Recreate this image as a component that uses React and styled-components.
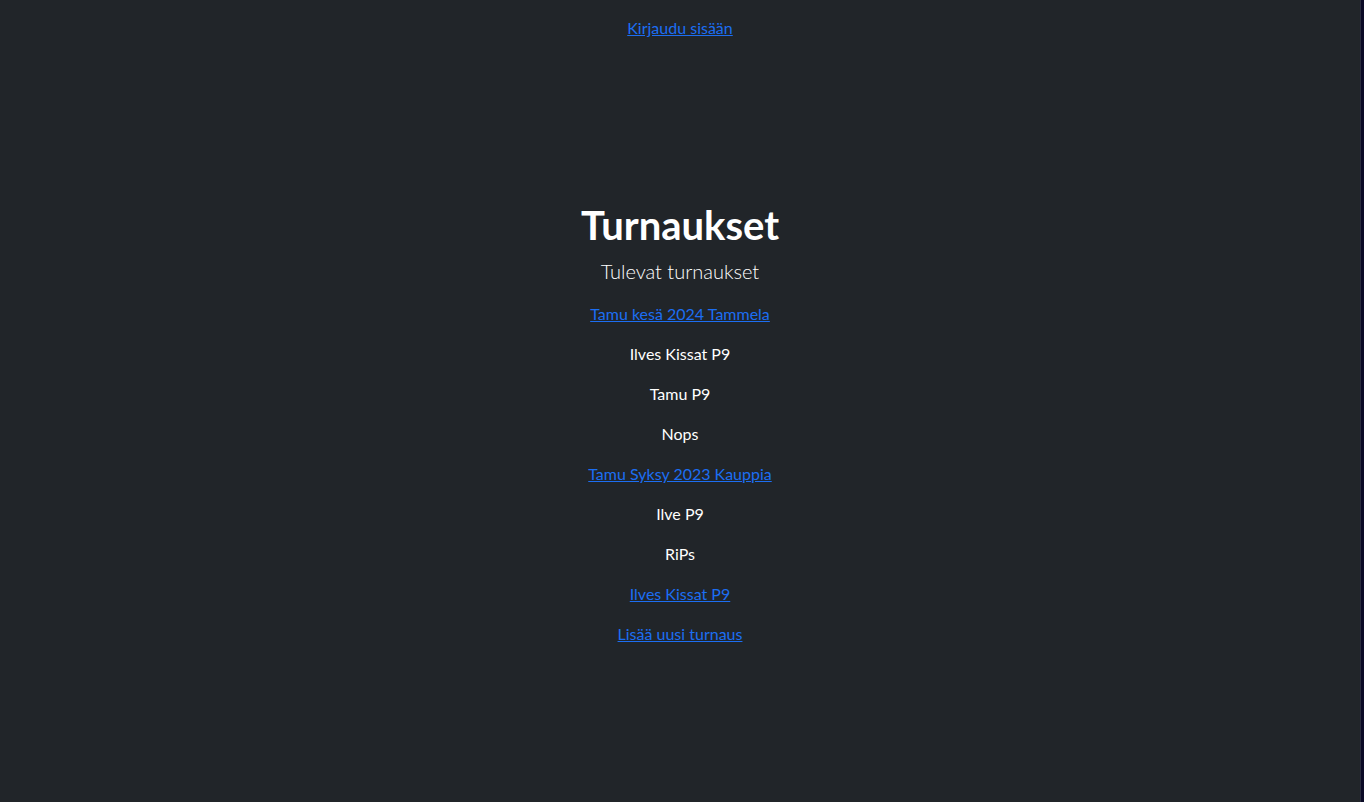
import React from "react";
import styled, { createGlobalStyle } from "styled-components";

const GlobalStyle = createGlobalStyle`
  html {
    background-color: #0a0a26;
  }
  body {
    margin: 0;
    font-family: Lato, "Liberation Sans", sans-serif;
    font-size: 16px;
    line-height: 1.5;
    color: #ffffff;
  }
`;

const tournaments = [
  { name: "Tamu kesä 2024 Tammela", link: true },
  { name: "Ilves Kissat P9" },
  { name: "Tamu P9" },
  { name: "Nops" },
  { name: "Tamu Syksy 2023 Kauppia", link: true },
  { name: "Ilve P9" },
  { name: "RiPs" },
  { name: "Ilves Kissat P9", link: true },
];

const Page = () => {
  return (
    <Wrapper>
      <Header>
        <Link href="#">Kirjaudu sisään</Link>
      </Header>
      <Main>
        <Heading>Turnaukset</Heading>
        <Lead>Tulevat turnaukset</Lead>
        {tournaments.map((t, i) => (
          <Item key={i}>{t.link ? <Link href="#">{t.name}</Link> : t.name}</Item>
        ))}
        <Item>
          <Link href="#">Lisää uusi turnaus</Link>
        </Item>
      </Main>
    </Wrapper>
  );
};

const Wrapper = styled.div`
  width: calc(100% - 3px);
  min-height: 802px;
  background-color: #212529;
  border-right: 1px solid #2a2c3e;
  box-sizing: border-box;
  text-align: center;
`;

const Header = styled.header`
  padding: 16px 0;
`;

const Main = styled.main`
  padding-top: 145px;
`;

const Link = styled.a`
  color: #1c6ef2;
  text-decoration: underline;
`;

const Heading = styled.h1`
  margin: 0 0 7px;
  font-size: 40px;
  font-weight: 700;
  line-height: 1.2;
`;

const Lead = styled.p`
  margin: 0 0 16px;
  font-size: 20px;
  font-weight: 300;
  line-height: 1.5;
`;

const Item = styled.p`
  margin: 0 0 16px;
`;

export default function App() {
  return (
    <>
      <GlobalStyle />
      <Page />
    </>
  );
}
